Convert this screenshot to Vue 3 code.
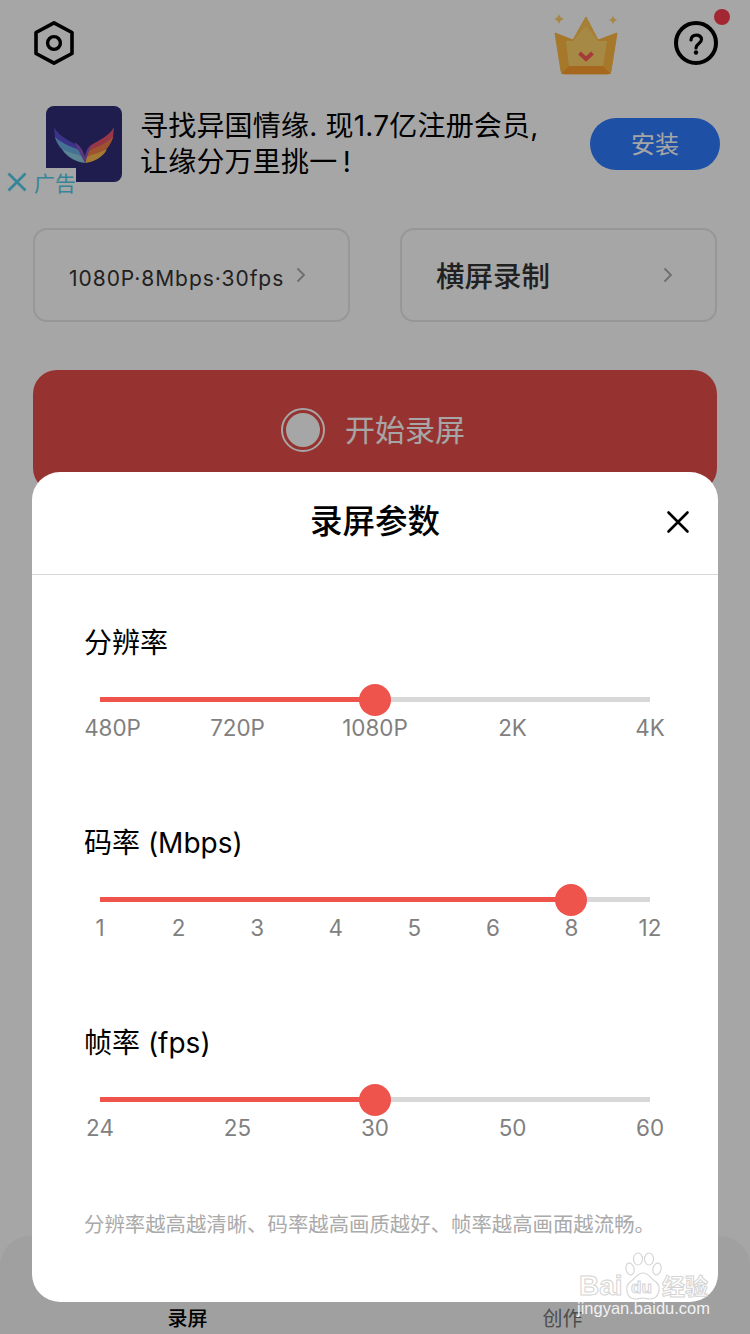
<template>
  <div class="page">
    <header class="topbar">
      <svg class="hex" viewBox="0 0 42 46" width="42" height="46">
        <path d="M21 2.800 L39 12.500 V33.500 L21 43.200 L3 33.500 V12.500 Z" fill="none" stroke="#000" stroke-width="3.600" stroke-linejoin="round" />
        <circle cx="21" cy="23" r="6.400" fill="none" stroke="#000" stroke-width="3.400" />
      </svg>
      <div class="top-right">
        <svg class="crown" viewBox="0 0 64 62" width="64" height="62">
          <path d="M1 19 L19 26 L32 3 L44 26 L63 19 L57 57 Q56.500 60 54 60 H10 Q7.500 60 7 57 Z" fill="#ffb944" stroke="#ffb944" stroke-linejoin="round" />
          <path d="M12 27 L19 27 L32 11 L44 27 L53 27 L49 52 H15 Z" fill="#ffdc78" opacity="0.75" />
          <path d="M32 3 L19 26 L32 12 L44 26 Z" fill="#ffc552" />
          <path d="M15 52 H49 L57 60 H7 Z" fill="#ff9f30" />
          <path d="M25.500 39 L32 45 L38.500 39" fill="none" stroke="#ff5c58" stroke-width="4" />
          <path d="M5 0 Q6 4 10 5 Q6 6 5 10 Q4 6 0 5 Q4 4 5 0 Z M59 2 Q60 5 63 6 Q60 7 59 10 Q58 7 55 6 Q58 5 59 2 Z" fill="#ffd06c" />
        </svg>
        <div class="help">
          <svg viewBox="0 0 44 44" width="44" height="44">
            <circle cx="22" cy="22" r="20" fill="none" stroke="#000" stroke-width="4" />
            <path d="M17 19 C17 12.500 27.500 12.500 27.500 18.500 C27.500 22.500 22 22.500 22 27" fill="none" stroke="#000" stroke-width="3.200" stroke-linecap="round" />
            <circle cx="22" cy="31.500" r="2.200" fill="#000" />
          </svg>
          <span class="dot"></span>
        </div>
      </div>
    </header>

    <section class="ad">
      <div class="ad-logo">
        <svg viewBox="0 0 76 76" width="76" height="76">
          <path d="M8 21 C13 31 25 35 33 41 L38 50 C27 47 13 42 9 32 Z" fill="#5a4fd2" />
          <path d="M9 31 C16 38 27 41 35 45 L38 54 C27 52 13 46 9 31 Z" fill="#6ab0e4" />
          <path d="M16 43 C23 47 31 48 37 51 L39 57 C31 56 21 52 16 43 Z" fill="#8ccce0" />
          <path d="M68 21 C63 31 52 34 44 40 L39 50 C50 47 63 42 67 32 Z" fill="#e8546e" />
          <path d="M67 31 C60 38 50 41 43 45 L39 54 C50 52 63 46 67 31 Z" fill="#f27f4a" />
          <path d="M61 43 C54 47 46 48 41 51 L39 57 C47 56 57 52 61 43 Z" fill="#fbbb50" />
          <path d="M28 36 C34 39 37 44 39 51 C40 46 41 42 45 39 L39 57 Z" fill="#8a56c4" />
        </svg>
      </div>
      <p class="ad-text">寻找异国情缘. 现1.7亿注册会员,<br />让缘分万里挑一&#8201;!</p>
      <button class="install">安装</button>
      <div class="ad-tag">
        <svg viewBox="0 0 20 20" width="20" height="20">
          <path d="M1.500 1.500 L18.500 18.500 M18.500 1.500 L1.500 18.500" stroke="#55cdea" stroke-width="2.800" fill="none" />
        </svg>
        <span>广告</span>
      </div>
    </section>

    <section class="cards">
      <div class="card">
        <span class="card-small">1080P·8Mbps·30fps</span>
        <svg class="chev first" viewBox="0 0 10 16" width="10" height="16"><path d="M1.500 1.500 L8 8 L1.500 14.500" fill="none" stroke="#aaa" stroke-width="1.800" /></svg>
      </div>
      <div class="card">
        <span class="card-big">横屏录制</span>
        <svg class="chev second" viewBox="0 0 10 16" width="10" height="16"><path d="M1.500 1.500 L8 8 L1.500 14.500" fill="none" stroke="#aaa" stroke-width="1.800" /></svg>
      </div>
    </section>

    <button class="record">
      <span class="ring"><span class="ring-in"></span></span>
      <span class="record-label">开始录屏</span>
    </button>

    <nav class="tabs">
      <span class="tab on">录屏</span>
      <span class="tab">创作</span>
    </nav>

    <div class="mask"></div>

    <div class="modal">
      <div class="modal-head">
        <h2>录屏参数</h2>
        <svg class="close" viewBox="0 0 24 24" width="24" height="24">
          <path d="M2.500 2.500 L21.500 21.500 M21.500 2.500 L2.500 21.500" stroke="#000" stroke-width="2.600" stroke-linecap="round" />
        </svg>
      </div>
      <div class="modal-body">
        <div v-for="s in sliders" :key="s.title" class="group">
          <div class="group-title">{{ s.title }}</div>
          <div class="track">
            <div class="fill" :style="{ width: percent(s) + '%' }"></div>
            <div class="thumb" :style="{ left: percent(s) + '%' }"></div>
          </div>
          <div class="ticks">
            <span v-for="t in s.ticks" :key="t" class="tick"><i>{{ t }}</i></span>
          </div>
        </div>
        <p class="note">分辨率越高越清晰、码率越高画质越好、帧率越高画面越流畅。</p>
      </div>
    </div>

    <div class="mark">
      <svg class="paw" viewBox="0 0 38 50" width="38" height="50">
        <g fill="#fff" fill-opacity="0.6" stroke="#d6d6d6" stroke-width="1.200">
          <ellipse cx="6" cy="17" rx="4" ry="6" transform="rotate(-15 6 17)" />
          <ellipse cx="14" cy="7" rx="4.500" ry="6" />
          <ellipse cx="25" cy="7" rx="4.500" ry="6" />
          <ellipse cx="33" cy="17" rx="4" ry="6" transform="rotate(15 33 17)" />
          <path d="M19 21 C25 21 27 27 32 30 C38 35 35 47 26 47 C22 47 21 46 19 46 C17 46 15 47 11 47 C3 47 0 35 6 30 C11 27 13 21 19 21 Z" />
        </g>
      </svg>
      <span class="mark-bai">Bai</span>
      <span class="mark-du">du</span>
      <span class="mark-jy">经验</span>
      <div class="mark-url">jingyan.baidu.com</div>
    </div>
  </div>
</template>

<script setup>
const sliders = [
  { title: '分辨率', ticks: ['480P', '720P', '1080P', '2K', '4K'], value: 2 },
  { title: '码率 (Mbps)', ticks: ['1', '2', '3', '4', '5', '6', '8', '12'], value: 6 },
  { title: '帧率 (fps)', ticks: ['24', '25', '30', '50', '60'], value: 2 },
];

function percent(s) {
  return (s.value / (s.ticks.length - 1)) * 100;
}
</script>

<style>
html,
body {
  margin: 0;
  background: #fff;
}
</style>

<style scoped>
.page {
  position: relative;
  width: 750px;
  height: 1334px;
  overflow: hidden;
  background: #fff;
  font-family: Inter, "Noto Sans CJK SC", sans-serif;
  color: #000;
}

.topbar {
  display: flex;
  justify-content: space-between;
  padding: 14px 32px 0 33px;
  height: 92px;
  box-sizing: border-box;
}
.hex {
  margin-top: 6px;
}
.top-right {
  display: flex;
  gap: 56px;
}
.help {
  position: relative;
  margin-top: 7px;
  width: 44px;
  height: 44px;
}
.dot {
  position: absolute;
  top: -12px;
  right: -12px;
  width: 16px;
  height: 16px;
  border-radius: 50%;
  background: #fa3c4e;
}

.ad {
  position: relative;
  display: flex;
  align-items: center;
  height: 76px;
  padding: 14px 30px 0 46px;
}
.ad-logo {
  width: 76px;
  height: 76px;
  flex: none;
  background: #2e2d78;
  border-radius: 8px;
}
.ad-logo svg {
  display: block;
}
.ad-text {
  flex: 1;
  margin: 0 0 0 18px;
  font-size: 28px;
  line-height: 36px;
  letter-spacing: 0.2px;
  white-space: nowrap;
}
.install {
  width: 130px;
  height: 52px;
  border: 0;
  border-radius: 26px;
  background: #2f7cff;
  color: #fff;
  font-family: inherit;
  font-size: 24px;
  padding: 0 0 4px;
}
.ad-tag {
  position: absolute;
  left: 0;
  top: 76px;
  width: 76px;
  height: 27px;
  background: #fff;
  display: flex;
  align-items: center;
  gap: 7px;
  padding-left: 7px;
  box-sizing: border-box;
  color: #55cdea;
  font-size: 21px;
  white-space: nowrap;
}

.cards {
  display: flex;
  gap: 50px;
  padding: 46px 33px 0;
}
.card {
  position: relative;
  flex: 1;
  height: 94px;
  box-sizing: border-box;
  border: 2px solid #e8e8e8;
  border-radius: 14px;
  display: flex;
  align-items: center;
  color: #333;
}
.card-small {
  margin: 6px 0 0 34px;
  font-size: 21px;
  letter-spacing: 0.95px;
  white-space: nowrap;
}
.card-big {
  margin: 0 0 2px 34px;
  font-size: 28.500px;
  font-weight: 500;
}
.chev {
  position: absolute;
  top: 37px;
  left: 261px;
}

.record {
  margin: 48px 33px 0;
  width: 684px;
  height: 122px;
  border: 0;
  border-radius: 24px;
  background: #e74e4a;
  color: #fff;
  display: flex;
  align-items: center;
  justify-content: center;
  gap: 20px;
  font-family: inherit;
  font-size: 30px;
  padding: 0 4px 2px 0;
}
.record-label {
  margin-top: -4px;
}
.ring {
  width: 44px;
  height: 44px;
  box-sizing: border-box;
  border: 2px solid #fff;
  border-radius: 50%;
  display: flex;
  align-items: center;
  justify-content: center;
}
.ring-in {
  width: 34px;
  height: 34px;
  border-radius: 50%;
  background: #fff;
}

.tabs {
  position: absolute;
  left: 0;
  right: 0;
  bottom: 0;
  height: 98px;
  background: #f6f6f6;
  border-radius: 30px 30px 0 0;
  display: flex;
  align-items: flex-end;
}
.tab {
  flex: 1;
  text-align: center;
  font-size: 20px;
  line-height: 30px;
  color: #777;
}
.tab.on {
  color: #000;
  font-weight: 500;
}

.mask {
  position: absolute;
  inset: 0;
  background: rgba(0, 0, 0, 0.35);
}

.modal {
  position: absolute;
  left: 32px;
  top: 472px;
  width: 686px;
  height: 830px;
  background: #fff;
  border-radius: 28px;
}
.modal-head {
  position: relative;
  height: 102px;
  border-bottom: 1px solid #d8d8d8;
  display: flex;
  align-items: center;
  justify-content: center;
}
.modal-head h2 {
  margin: 0 0 10px;
  font-size: 32.500px;
  font-weight: 500;
}
.close {
  position: absolute;
  right: 28px;
  top: 38px;
}
.modal-body {
  padding: 48px 53px 0 52px;
}
.group {
  height: 200px;
}
.group-title {
  font-size: 28px;
  line-height: 40px;
}
.track {
  position: relative;
  margin: 34px 15px 0 16px;
  height: 5px;
  background: #d8d8d8;
}
.fill {
  height: 100%;
  background: #ee534c;
}
.thumb {
  position: absolute;
  top: 50%;
  width: 32px;
  height: 32px;
  border-radius: 50%;
  background: #ee534c;
  transform: translate(-50%, -50%);
}
.ticks {
  display: flex;
  justify-content: space-between;
  margin: 13px 15px 0 16px;
}
.tick {
  width: 0;
  display: flex;
  justify-content: center;
  font-size: 22.400px;
  line-height: 26px;
  color: #808080;
  white-space: nowrap;
}
.tick i {
  font-style: normal;
}
.group:first-child .tick:first-child i {
  margin-left: 25px;
}
.note {
  margin: -12px 0 0;
  font-size: 20.400px;
  line-height: 28px;
  color: #aaa;
  white-space: nowrap;
}

.mark {
  position: absolute;
  left: 577px;
  top: 1252px;
  width: 135px;
  height: 66px;
  color: #fff;
}
.paw {
  position: absolute;
  left: 47px;
  top: 0;
}
.mark-bai,
.mark-du,
.mark-jy {
  position: absolute;
  font-weight: 700;
  white-space: nowrap;
  color: #fff;
  -webkit-text-stroke: 1px #d4d4d4;
}
.mark-bai {
  left: 2px;
  top: 21px;
  font-family: "Liberation Sans", sans-serif;
  font-size: 28px;
  line-height: 26px;
}
.mark-du {
  left: 54px;
  top: 27px;
  font-family: "Liberation Sans", sans-serif;
  font-size: 17px;
  line-height: 18px;
}
.mark-jy {
  left: 85px;
  top: 21px;
  font-family: "Noto Sans CJK SC", sans-serif;
  font-size: 23px;
  line-height: 25px;
}
.mark-url {
  position: absolute;
  top: 47px;
  left: 0;
  font-family: "Liberation Sans", sans-serif;
  font-size: 16.500px;
  line-height: 18px;
  white-space: nowrap;
  color: #f2f2f2;
}
</style>
